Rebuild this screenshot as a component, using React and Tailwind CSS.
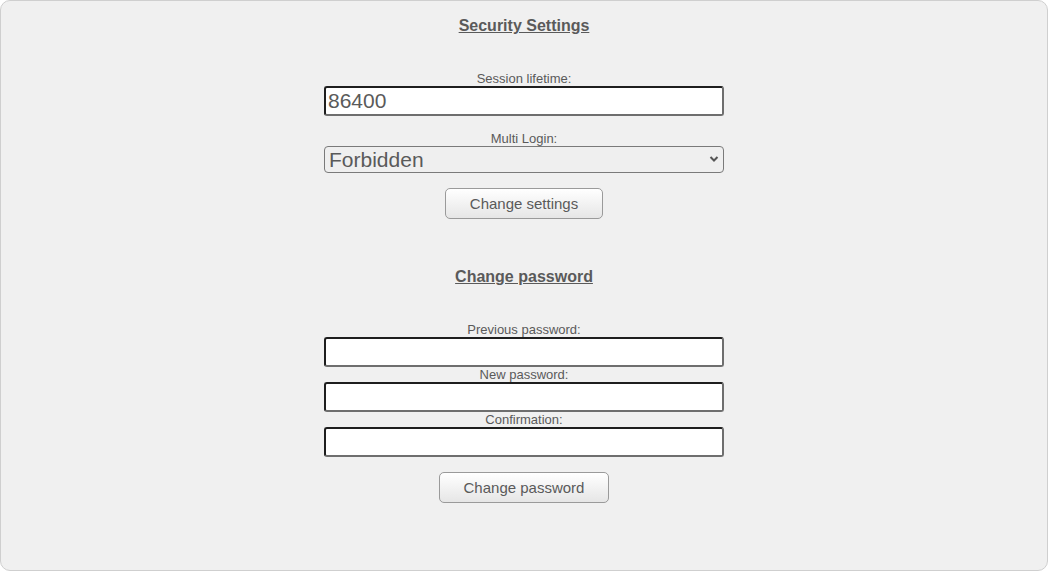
import { useState } from 'react';

function Field({ label, type = 'text', value, onChange }) {
  return (
    <div className="flex flex-col items-center">
      <label className="text-[13px] leading-[15px] text-[#5a5a5a]">{label}</label>
      <input
        type={type}
        value={value}
        onChange={(e) => onChange(e.target.value)}
        className="w-[400px] h-[30px] bg-white rounded-[3px] border-2 border-t-[#1e1e1e] border-l-[#1e1e1e] border-r-[#6e6e6e] border-b-[#6e6e6e] px-[2px] text-[21px] leading-[26px] text-[#5a5a5a] outline-none"
      />
    </div>
  );
}

function GrayButton({ children, className = '' }) {
  return (
    <button
      className={`h-[31px] px-6 border border-[#9a9a9a] rounded-[5px] bg-gradient-to-b from-white to-[#e6e6e6] text-[15px] leading-[17px] text-[#5a5a5a] ${className}`}
    >
      {children}
    </button>
  );
}

export default function App() {
  const [lifetime, setLifetime] = useState('86400');
  const [multi, setMulti] = useState('Forbidden');
  const [prev, setPrev] = useState('');
  const [next, setNext] = useState('');
  const [confirm, setConfirm] = useState('');

  return (
    <div
      className="w-[1050px] h-[571px] bg-white"
      style={{ fontFamily: '"Liberation Sans", Arial, sans-serif' }}
    >
      <div className="w-[1048px] h-full border border-[#cfcfcf] rounded-[10px] bg-[#f0f0f0] flex flex-col items-center">
        {/* security settings */}
        <h2 className="mt-[16px] text-[16px] leading-[18px] font-bold underline text-[#5a5a5a]">Security Settings</h2>

        <div className="mt-[36px]">
          <Field label="Session lifetime:" value={lifetime} onChange={setLifetime} />
        </div>

        <div className="mt-[15px] flex flex-col items-center">
          <label className="text-[13px] leading-[15px] text-[#5a5a5a]">Multi Login:</label>
          <div className="relative">
            <select
              value={multi}
              onChange={(e) => setMulti(e.target.value)}
              className="appearance-none w-[400px] h-[27px] border border-[#7a7a7a] rounded-[4px] bg-[#efefef] pl-[4px] text-[21px] leading-[24px] text-[#5a5a5a] outline-none"
            >
              <option>Forbidden</option>
              <option>Allowed</option>
            </select>
            <svg
              className="absolute right-[5px] top-[9px] w-[10px] h-[8px] pointer-events-none"
              viewBox="0 0 10 8"
              fill="none"
              stroke="#555"
              strokeWidth="2"
            >
              <path d="M1.5 2l3.5 3.5L8.5 2" />
            </svg>
          </div>
        </div>

        <GrayButton className="mt-[14px]">Change settings</GrayButton>

        {/* password */}
        <h2 className="mt-[49px] text-[16px] leading-[18px] font-bold underline text-[#5a5a5a]">Change password</h2>

        <div className="mt-[36px] flex flex-col">
          <Field label="Previous password:" type="password" value={prev} onChange={setPrev} />
          <Field label="New password:" type="password" value={next} onChange={setNext} />
          <Field label="Confirmation:" type="password" value={confirm} onChange={setConfirm} />
        </div>

        <GrayButton className="mt-[15px]">Change password</GrayButton>
      </div>
    </div>
  );
}
